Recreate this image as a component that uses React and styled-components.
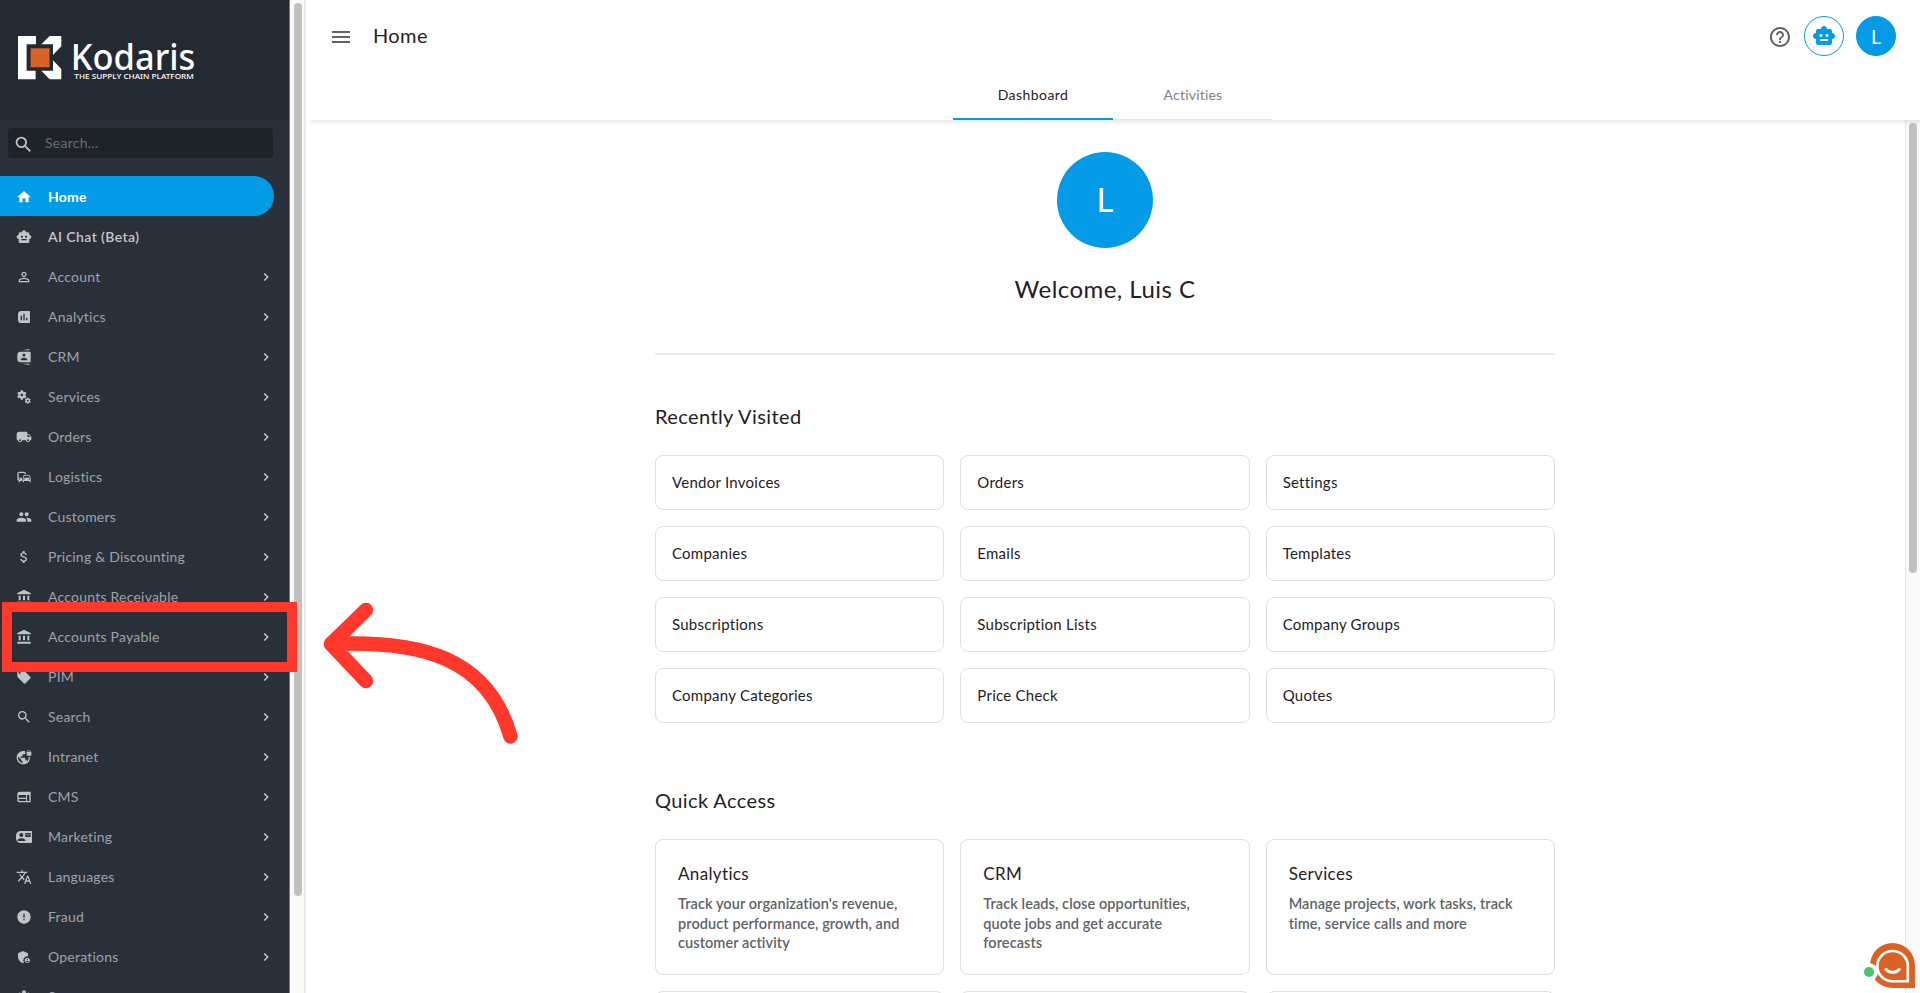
/* eslint-disable react/prop-types */
import styled, { createGlobalStyle, css } from "styled-components";
import {
  MdAccountBalance,
  MdAdminPanelSettings,
  MdAttachMoney,
  MdChevronRight,
  MdError,
  MdHelpOutline,
  MdHome,
  MdLocalOffer,
  MdMenu,
  MdMiscellaneousServices,
  MdOutlineCommute,
  MdPeople,
  MdPersonOutline,
  MdSearch,
  MdSettings,
  MdSmartToy,
  MdTranslate,
  MdVpnLock,
} from "react-icons/md";

/****************** softer versions of the material icons ***************/

function AnalyticsIcon({ className }) {
  return (
    <svg className={className} viewBox="0 0 24 24" fill="currentColor">
      <path
        fillRule="evenodd"
        d="M8 3h12a1 1 0 0 1 1 1v16a1 1 0 0 1-1 1H8a5 5 0 0 1-5-5V8a5 5 0 0 1 5-5zM7 10v7h2v-7zm4-3v10h2V7zm4 6v4h2v-4z"
      />
    </svg>
  );
}

function CrmIcon({ className }) {
  return (
    <svg className={className} viewBox="0 0 24 24" fill="currentColor">
      <path
        fillRule="evenodd"
        d="M7 4h14a1 1 0 0 1 1 1v14a1 1 0 0 1-1 1H7a5 5 0 0 1-5-5V9a5 5 0 0 1 5-5zm5 2.750a2.250 2.250 0 1 0 0 4.500 2.250 2.250 0 0 0 0-4.500zM7 17h10v-1.500c0-1.670-3.330-2.500-5-2.500s-5 .83-5 2.500z"
      />
      <path d="m10 2 10-2v2zM10 22h10v2z" />
    </svg>
  );
}

function TruckIcon({ className }) {
  return (
    <svg className={className} viewBox="0 0 24 24" fill="currentColor">
      <path
        fillRule="evenodd"
        d="M17 8h2.500a1 1 0 0 1 .8.400l2.500 3.300a1 1 0 0 1 .2.600V16a1 1 0 0 1-1 1h-1a3 3 0 0 1-6 0H9a3 3 0 0 1-6 0 2 2 0 0 1-2-2V8a4 4 0 0 1 4-4h11a1 1 0 0 1 1 1zM6 18.500a1.500 1.500 0 1 0 0-3 1.500 1.500 0 0 0 0 3zm12 0a1.500 1.500 0 1 0 0-3 1.500 1.500 0 0 0 0 3zM17 9.500V12h4.460L19.500 9.500z"
      />
    </svg>
  );
}

function CmsIcon({ className }) {
  return (
    <svg className={className} viewBox="0 0 24 24" fill="currentColor">
      <path
        fillRule="evenodd"
        d="M6 4h15a1 1 0 0 1 1 1v14a1 1 0 0 1-1 1H6a4 4 0 0 1-4-4V8a4 4 0 0 1 4-4zM4 9v4h11V9zm0 6v1a2 2 0 0 0 2 2h9v-3zm12.500-6v9H20V9z"
      />
    </svg>
  );
}

function MarketingIcon({ className }) {
  return (
    <svg className={className} viewBox="0 0 24 24" fill="currentColor">
      <path
        fillRule="evenodd"
        d="M7 3h16a1 1 0 0 1 1 1v16a1 1 0 0 1-1 1H7a7 7 0 0 1-7-7v-4a7 7 0 0 1 7-7zm1 3a3 3 0 1 0 0 6 3 3 0 0 0 0-6zm6 12v-1c0-2-4-3.100-6-3.100S2.500 15 2.500 17l.5 1zM14 6v6h8V6zm1 1 3 2 3-2v1l-3 2-3-2z"
      />
    </svg>
  );
}

const navItems = [
  { label: "Home", icon: MdHome, type: "active" },
  { label: "AI Chat (Beta)", icon: MdSmartToy, type: "bold" },
  { label: "Account", icon: MdPersonOutline },
  { label: "Analytics", icon: AnalyticsIcon },
  { label: "CRM", icon: CrmIcon },
  { label: "Services", icon: MdMiscellaneousServices },
  { label: "Orders", icon: TruckIcon },
  { label: "Logistics", icon: MdOutlineCommute },
  { label: "Customers", icon: MdPeople },
  { label: "Pricing & Discounting", icon: MdAttachMoney },
  { label: "Accounts Receivable", icon: MdAccountBalance },
  { label: "Accounts Payable", icon: MdAccountBalance },
  { label: "PIM", icon: MdLocalOffer },
  { label: "Search", icon: MdSearch },
  { label: "Intranet", icon: MdVpnLock },
  { label: "CMS", icon: CmsIcon },
  { label: "Marketing", icon: MarketingIcon },
  { label: "Languages", icon: MdTranslate },
  { label: "Fraud", icon: MdError },
  { label: "Operations", icon: MdAdminPanelSettings },
  { label: "System", icon: MdSettings },
];

const recentlyVisited = [
  "Vendor Invoices",
  "Orders",
  "Settings",
  "Companies",
  "Emails",
  "Templates",
  "Subscriptions",
  "Subscription Lists",
  "Company Groups",
  "Company Categories",
  "Price Check",
  "Quotes",
];

const quickAccess = [
  {
    title: "Analytics",
    text: "Track your organization's revenue, product performance, growth, and customer activity",
  },
  {
    title: "CRM",
    text: "Track leads, close opportunities, quote jobs and get accurate forecasts",
  },
  {
    title: "Services",
    text: "Manage projects, work tasks, track time, service calls and more",
  },
];

function Logo() {
  return (
    <StyledLogo viewBox="0 0 200 50">
      <path
        fill="#fff"
        d="M0 0h18v8.3H8.6v26.4h9V43.300H0zM31.700 0h11.600v10.300l-8.300 8.700V8.300H23.300zM35 24.300l8.300 8.700v10.300H31.700l-8.400-8.600H35z"
      />
      <path fill="#db6227" d="M12.600 12.300h19v19h-19z" />
      <text
        x="52.800"
        y="34"
        fontSize="36.500"
        fontWeight="500"
        textLength="124.500"
        lengthAdjust="spacingAndGlyphs"
      >
        Kodaris
      </text>
      <text
        x="56.300"
        y="42.800"
        fontSize="7.400"
        fontWeight="500"
        textLength="119.500"
        lengthAdjust="spacingAndGlyphs"
      >
        THE SUPPLY CHAIN PLATFORM
      </text>
    </StyledLogo>
  );
}

function Sidebar() {
  return (
    <StyledSidebar>
      <Brand>
        <Logo />
      </Brand>
      <SearchBox>
        <MdSearch />
        <span>Search...</span>
      </SearchBox>
      <Nav>
        {navItems.map(({ label, icon: Icon, type }) => (
          <NavItem key={label} $type={type}>
            <Icon className="icon" />
            <span>{label}</span>
            {!type && <MdChevronRight className="chevron" />}
          </NavItem>
        ))}
      </Nav>
    </StyledSidebar>
  );
}

function Header() {
  return (
    <StyledHeader>
      <TopBar>
        <MdMenu className="menu" />
        <h1>Home</h1>
        <MdHelpOutline className="help" />
        <RoundButton>
          <MdSmartToy />
        </RoundButton>
        <RoundButton $filled>L</RoundButton>
      </TopBar>
      <Tabs>
        <Tab $active>Dashboard</Tab>
        <Tab>Activities</Tab>
      </Tabs>
    </StyledHeader>
  );
}

function Dashboard() {
  return (
    <Content>
      <Avatar>L</Avatar>
      <Welcome>Welcome, Luis C</Welcome>
      <SectionTitle>Recently Visited</SectionTitle>
      <Grid>
        {recentlyVisited.map((name) => (
          <LinkCard key={name}>{name}</LinkCard>
        ))}
      </Grid>
      <SectionTitle $spaced>Quick Access</SectionTitle>
      <Grid>
        {quickAccess.map(({ title, text }) => (
          <InfoCard key={title}>
            <h3>{title}</h3>
            <p>{text}</p>
          </InfoCard>
        ))}
        <InfoCard />
        <InfoCard />
        <InfoCard />
      </Grid>
    </Content>
  );
}

function App() {
  return (
    <>
      <GlobalStyles />
      <Layout>
        <Sidebar />
        <Scrollbar $side="left">
          <Thumb $height={893} />
        </Scrollbar>
        <Main>
          <Header />
          <Body>
            <Dashboard />
            <Scrollbar>
              <Thumb $height={450} />
            </Scrollbar>
          </Body>
        </Main>
        <Highlight />
        <Arrow viewBox="0 0 200 160">
          <path d="M46 20 11 54 46 91M11 54C100 50 168 67 190.500 146.500" />
        </Arrow>
        <ChatWidget viewBox="0 0 60 50">
          <path
            fill="#db6227"
            d="M32.500 1a22.500 22.500 0 0 1 22.500 22.500V46H32.500a22.500 22.500 0 0 1 0-45z"
          />
          <path
            fill="none"
            stroke="#fff"
            strokeWidth="2.600"
            d="M32.500 9a15 15 0 0 1 15.300 15v15.300H32.500a15.150 15.150 0 0 1 0-30.300z"
          />
          <path
            fill="none"
            stroke="#fff"
            strokeWidth="2.800"
            strokeLinecap="round"
            d="M25.800 27.200c4 4.200 9.800 4.200 13.600 0"
          />
          <circle cx="9" cy="30" r="9" fill="#fff" />
          <circle cx="9" cy="30" r="5" fill="#45c56c" />
        </ChatWidget>
      </Layout>
    </>
  );
}

export default App;

/****************** styled component ***************/

const GlobalStyles = createGlobalStyle`
  * {
    box-sizing: border-box;
    margin: 0;
    padding: 0;
  }

  body {
    font-family: "Lato", "Open Sans", sans-serif;
    font-size: 14px;
    color: #1f2126;
    background: #fff;
    overflow: hidden;
  }

  svg {
    display: block;
    flex-shrink: 0;
  }
`;

const Layout = styled.div`
  position: relative;
  display: flex;
  width: 100vw;
  height: 100vh;
  overflow: hidden;
`;

const StyledSidebar = styled.aside`
  display: flex;
  flex-direction: column;
  flex: 0 0 290px;
  overflow: hidden;
  background: #2a303a;
  border-right: 1px solid #74787f;
`;

const Brand = styled.div`
  flex: 0 0 120px;
  padding: 36px 0 0 17.5px;
  background: #242a33;
`;

const StyledLogo = styled.svg`
  width: 200px;
  height: 50px;
  overflow: visible;

  text {
    font-family: "Noto Sans", sans-serif;
    fill: #fff;
  }
`;

const SearchBox = styled.div`
  display: flex;
  align-items: center;
  flex: 0 0 30px;
  margin: 8px 16px 18px 8px;
  padding-left: 5px;
  border-radius: 4px;
  background: #1e2229;
  color: #696d73;
  letter-spacing: 0.25px;

  svg {
    margin: 2px 11px 0 0;
    color: #c3c5c8;
    font-size: 21px;
  }

  span {
    margin-top: -1px;
  }
`;

const Nav = styled.nav`
  flex: 1;
`;

const NavItem = styled.div`
  display: flex;
  align-items: center;
  width: 274px;
  height: 40px;
  padding: 1px 0 0 16px;
  color: #9fa2a7;
  letter-spacing: 0.22px;

  .icon {
    width: 16px;
    height: 16px;
    margin-right: 16px;
    color: #c0c3c7;
    overflow: visible;
  }

  .chevron {
    width: 16px;
    height: 16px;
    margin-left: auto;
    color: #d0d2d4;
  }

  ${({ $type }) =>
    $type === "bold" &&
    css`
      color: #c4c6c9;
      font-weight: 600;
      letter-spacing: 0.4px;
    `}

  ${({ $type }) =>
    $type === "active" &&
    css`
      border-radius: 0 20px 20px 0;
      background: #039be5;
      color: #fff;
      font-weight: 700;

      .icon {
        color: #fff;
      }
    `}
`;

const Scrollbar = styled.div`
  flex: 0 0 15px;
  padding: 3px 0 0 3px;
  background: #fafafa;
  border-left: 1px solid #e8e8e8;

  ${({ $side }) =>
    $side === "left" &&
    css`
      flex-basis: 16px;
      padding-left: 3.5px;
      border-left: 0;
      border-right: 2px solid #e9e9e9;
    `}
`;

const Thumb = styled.div`
  width: 8px;
  height: ${({ $height }) => $height}px;
  border-radius: 4px;
  background: #c1c1c1;
`;

const Main = styled.main`
  display: flex;
  flex-direction: column;
  flex: 1;
`;

const StyledHeader = styled.header`
  z-index: 1;
  flex: 0 0 120px;
  background: #fff;
  box-shadow: 4px 2px 5px rgba(0, 0, 0, 0.11);
`;

const TopBar = styled.div`
  display: flex;
  align-items: center;
  height: 72px;
  padding: 0 24px 0 23px;

  h1 {
    margin: -2px 0 0 20px;
    font-size: 20px;
    font-weight: 400;
    letter-spacing: 0.4px;
  }

  .menu,
  .help {
    width: 24px;
    height: 24px;
    margin-top: 2px;
    color: #5f6368;
  }

  .help {
    margin-left: auto;
    margin-right: -6px;
  }
`;

const RoundButton = styled.div`
  display: flex;
  align-items: center;
  justify-content: center;
  width: 40px;
  height: 40px;
  margin-left: ${({ $filled }) => ($filled ? 12 : 18)}px;
  border: 1px solid #039be5;
  border-radius: 50%;
  background: ${({ $filled }) => ($filled ? "#039be5" : "#fff")};
  color: ${({ $filled }) => ($filled ? "#fff" : "#039be5")};
  font-size: 19px;

  svg {
    width: 24px;
    height: 24px;
  }
`;

const Tabs = styled.div`
  display: flex;
  justify-content: center;
  height: 48px;
`;

const Tab = styled.div`
  width: 160px;
  height: 48px;
  line-height: 46px;
  text-align: center;
  letter-spacing: ${({ $active }) => ($active ? 0.45 : 0.2)}px;
  color: ${({ $active }) => ($active ? "#1f2126" : "#808285")};
  border-bottom: ${({ $active }) =>
    $active ? "2.5px solid #039be5" : "1px solid #e4e4e4"};
`;

const Body = styled.div`
  display: flex;
  flex: 1;
  min-height: 0;
`;

const Content = styled.div`
  width: 900px;
  margin: 0 auto 0 349px;
  padding-top: 32px;
`;

const Avatar = styled.div`
  width: 96px;
  height: 96px;
  margin: 0 auto;
  border-radius: 50%;
  background: #039be5;
  color: #fff;
  font-size: 33px;
  line-height: 95px;
  text-align: center;
`;

const Welcome = styled.h2`
  height: 107px;
  padding-top: 26px;
  border-bottom: 2px solid #ebebeb;
  font-size: 24px;
  font-weight: 400;
  line-height: 30px;
  letter-spacing: 0.45px;
  text-align: center;
`;

const SectionTitle = styled.h2`
  margin: ${({ $spaced }) => ($spaced ? "63.5px 0 24px" : "46.5px 0 24px")};
  font-size: 20px;
  font-weight: 400;
  line-height: 29px;
  letter-spacing: 0.4px;
`;

const Grid = styled.div`
  display: grid;
  grid-template-columns: repeat(3, 1fr);
  gap: 16px;
`;

const Card = styled.div`
  border: 1px solid #dedfe1;
  border-radius: 8px;
`;

const LinkCard = styled(Card)`
  height: 55px;
  padding-left: 16px;
  font-size: 15px;
  line-height: 52px;
  letter-spacing: 0.25px;
`;

const InfoCard = styled(Card)`
  height: 136px;
  padding: 22px 30px 0 22px;

  h3 {
    font-size: 17px;
    font-weight: 400;
    line-height: 24px;
    letter-spacing: 0.35px;
  }

  p {
    margin-top: 8px;
    color: #5f6368;
    font-size: 14.5px;
    font-weight: 600;
    line-height: 19.6px;
    letter-spacing: 0.08px;
  }
`;

// callout frame drawn over the Accounts Payable row
const Highlight = styled.div`
  position: absolute;
  top: 602px;
  left: 2px;
  width: 295px;
  height: 70px;
  border: 10px solid #ff382b;
`;

const Arrow = styled.svg`
  position: absolute;
  top: 590px;
  left: 320px;
  width: 200px;
  height: 160px;
  fill: none;
  stroke: #ff382b;
  stroke-width: 14.5px;
  stroke-linecap: round;
  stroke-linejoin: round;
`;

const ChatWidget = styled.svg`
  position: absolute;
  top: 942px;
  left: 1860px;
  z-index: 2;
  width: 60px;
  height: 50px;
`;
